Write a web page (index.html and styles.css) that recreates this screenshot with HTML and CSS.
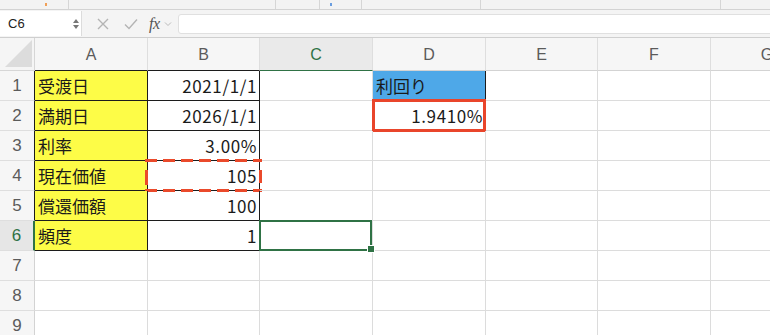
FILE: index.html
```html
<!DOCTYPE html>
<html lang="ja">
<head>
<meta charset="utf-8">
<link rel="stylesheet" href="styles.css">
</head>
<body>
<div class="app">
  <div class="strip">
    <span class="seg s1"><i class="mark orange"></i></span>
    <span class="seg s2"></span>
    <span class="seg s3"></span>
    <span class="seg s4"><i class="mark blue"></i></span>
    <span class="seg s5"></span>
    <span class="seg s6"></span>
  </div>
  <div class="fbar">
    <div class="namebox">
      <span class="ref">C6</span>
      <span class="spin"><i class="up"></i><i class="down"></i></span>
    </div>
    <div class="tools">
      <svg class="ic x" width="12" height="12" viewBox="0 0 12 12"><path d="M1 1L11 11M11 1L1 11" stroke="#b4b4b4" stroke-width="1.4" fill="none"/></svg>
      <svg class="ic ok" width="14" height="12" viewBox="0 0 14 12"><path d="M1 6.5L5 10.5L13 1.5" stroke="#b4b4b4" stroke-width="1.4" fill="none"/></svg>
      <span class="fx">fx</span>
      <svg class="ic chev" width="8" height="6" viewBox="0 0 8 6"><path d="M1 1.5L4 4.5L7 1.5" stroke="#bbbbbb" stroke-width="1" fill="none"/></svg>
    </div>
    <div class="input"></div>
  </div>
  <div class="sheet">
    <div class="corner"><svg width="27" height="27" viewBox="0 0 27 27"><path d="M27 0V27H0Z" fill="#dcdcdc"/></svg></div>
    <div class="ch">A</div>
    <div class="ch">B</div>
    <div class="ch sel">C</div>
    <div class="ch">D</div>
    <div class="ch">E</div>
    <div class="ch">F</div>
    <div class="ch">G</div>

    <div class="rh box">1</div>
    <div class="c y lbl">受渡日</div>
    <div class="c w num">2021/1/1</div>
    <div class="c"></div>
    <div class="c blue lbl">利回り</div>
    <div class="c"></div>
    <div class="c"></div>
    <div class="c"></div>

    <div class="rh box">2</div>
    <div class="c y lbl">満期日</div>
    <div class="c w num">2026/1/1</div>
    <div class="c"></div>
    <div class="c num redbox">1.9410%</div>
    <div class="c"></div>
    <div class="c"></div>
    <div class="c"></div>

    <div class="rh box">3</div>
    <div class="c y lbl">利率</div>
    <div class="c w num">3.00%</div>
    <div class="c"></div>
    <div class="c"></div>
    <div class="c"></div>
    <div class="c"></div>
    <div class="c"></div>

    <div class="rh box">4</div>
    <div class="c y lbl">現在価値</div>
    <div class="c w num dash">105<svg class="ants" width="117" height="33" viewBox="0 0 117 33"><path d="M0 1.5H117M0 31.5H117" stroke="#ea4a2b" stroke-width="3" stroke-dasharray="12 6" fill="none"/><path d="M1.5 11V26M115.5 11V24" stroke="#ea4a2b" stroke-width="3" fill="none"/></svg></div>
    <div class="c"></div>
    <div class="c"></div>
    <div class="c"></div>
    <div class="c"></div>
    <div class="c"></div>

    <div class="rh box">5</div>
    <div class="c y lbl">償還価額</div>
    <div class="c w num">100</div>
    <div class="c"></div>
    <div class="c"></div>
    <div class="c"></div>
    <div class="c"></div>
    <div class="c"></div>

    <div class="rh box cur">6</div>
    <div class="c y lbl last">頻度</div>
    <div class="c w num last">1</div>
    <div class="c active"></div>
    <div class="c"></div>
    <div class="c"></div>
    <div class="c"></div>
    <div class="c"></div>

    <div class="rh">7</div>
    <div class="c"></div><div class="c"></div><div class="c"></div><div class="c"></div><div class="c"></div><div class="c"></div><div class="c"></div>
    <div class="rh">8</div>
    <div class="c"></div><div class="c"></div><div class="c"></div><div class="c"></div><div class="c"></div><div class="c"></div><div class="c"></div>
    <div class="rh">9</div>
    <div class="c"></div><div class="c"></div><div class="c"></div><div class="c"></div><div class="c"></div><div class="c"></div><div class="c"></div>
  </div>
</div>
</body>
</html>
```
FILE: styles.css
```css
* { box-sizing: border-box; }
html, body { margin: 0; padding: 0; overflow: hidden; background: #ffffff; }
body { width: 770px; height: 335px; font-family: "Noto Sans CJK JP", "Liberation Sans", sans-serif; }
.app { width: 900px; }

.strip {
  height: 10px;
  background: #f3f3f3;
  border-bottom: 1px solid #d3d3d3;
  display: flex;
}
.seg { height: 9px; border-right: 1px solid #d6d6d6; position: relative; }
.s1 { width: 69px; }
.s2 { width: 207px; }
.s3 { width: 44px; }
.s4 { width: 42px; }
.s5 { width: 119px; }
.s6 { width: 240px; }
.mark { position: absolute; bottom: 3px; width: 2px; height: 3px; }
.mark.orange { left: 45px; background: #f0a058; }
.mark.blue { left: 10px; background: #6a9ee0; }

.fbar {
  height: 28px;
  background: #f4f4f4;
  border-bottom: 1px solid #cfcfcf;
  display: flex;
  align-items: center;
}
.namebox {
  width: 82px;
  height: 25px;
  background: #ffffff;
  border-right: 1px solid #dcdcdc;
  display: flex;
  align-items: center;
  justify-content: space-between;
  padding: 0 2px 0 8px;
  align-self: flex-start;
  margin-top: 1px;
}
.ref { font-family: "Liberation Sans", sans-serif; font-size: 13px; color: #222; }
.spin { display: flex; flex-direction: column; gap: 2px; }
.spin i { display: block; width: 0; height: 0; border-left: 3.5px solid transparent; border-right: 3.5px solid transparent; }
.spin .up { border-bottom: 4px solid #777; }
.spin .down { border-top: 4px solid #777; }
.tools { width: 96px; display: flex; align-items: center; padding-left: 15px; }
.ic.x { margin-right: 15px; }
.ic.ok { margin-right: 11px; }
.fx { font-family: "Liberation Serif", serif; font-style: italic; font-size: 16px; color: #555; margin-right: 4px; letter-spacing: -0.5px; }
.input { flex: 1; height: 20px; background: #fff; border: 1px solid #e0e0e0; border-radius: 3px; }

.sheet {
  display: grid;
  grid-template-columns: 35px 113px 112px 113px 113px 112px 113px 113px;
  grid-template-rows: 33px repeat(9, 30px);
  position: relative;
}
.corner {
  background: #f5f5f5;
  border-right: 1px solid #d6d6d6;
  border-bottom: 1px solid #d6d6d6;
  display: flex; align-items: flex-end; justify-content: flex-end;
  padding: 0 2px 3px 0;
}
.corner svg { display: block; }
.ch {
  background: #f6f6f6;
  border-right: 1px solid #dedede;
  border-bottom: 1px solid #d3d3d3;
  font-family: "Liberation Sans", sans-serif;
  font-size: 16px;
  color: #5b5b5b;
  display: flex; align-items: center; justify-content: center;
  padding-top: 2px;
}
.ch:nth-child(2), .ch:nth-child(3) { border-bottom-color: #1c1c1c; }
.ch.sel { background: #eaeaea; color: #2f7245; border-bottom: 1px solid #2f7245; }
.rh {
  background: #f6f6f6;
  border-right: 1px solid #d3d3d3;
  border-bottom: 1px solid #dedede;
  font-family: "Liberation Sans", sans-serif;
  font-size: 17px;
  color: #5b5b5b;
  display: flex; align-items: center; justify-content: center;
}
.rh.box { border-right-color: #1c1c1c; }
.rh.cur { background: #e6e6e6; color: #2f7245; border-right: 2px solid #2f7245; }
.c {
  border-right: 1px solid #dcdcdc;
  border-bottom: 1px solid #dcdcdc;
  font-size: 17px;
  color: #1a1a1a;
  display: flex; align-items: center;
  position: relative;
  white-space: nowrap;
}
.lbl { padding-left: 3px; }
.num { justify-content: flex-end; padding-right: 2px; letter-spacing: 0.6px; }
.y { background: #fdfc47; border-right-color: #1c1c1c; border-bottom-color: #1c1c1c; }
.w { border-right-color: #1c1c1c; border-bottom-color: #1c1c1c; }
.blue { background: #4ea8e8; border-right-color: #1c1c1c; }
.redbox::after {
  content: "";
  position: absolute;
  left: -1px; top: -2px; right: -1px; bottom: -2px;
  border: 3px solid #e9452b;
}
.ants { position: absolute; left: -3px; top: -2px; }
.active::after {
  content: "";
  position: absolute;
  left: -1px; top: -1px; right: 0; bottom: -1px;
  border: 2px solid #2f7245;
}
.active::before {
  content: "";
  position: absolute;
  right: -3px; bottom: -3px;
  width: 6px; height: 6px;
  background: #2f7245;
  border: 1px solid #fff;
  z-index: 2;
}
```
